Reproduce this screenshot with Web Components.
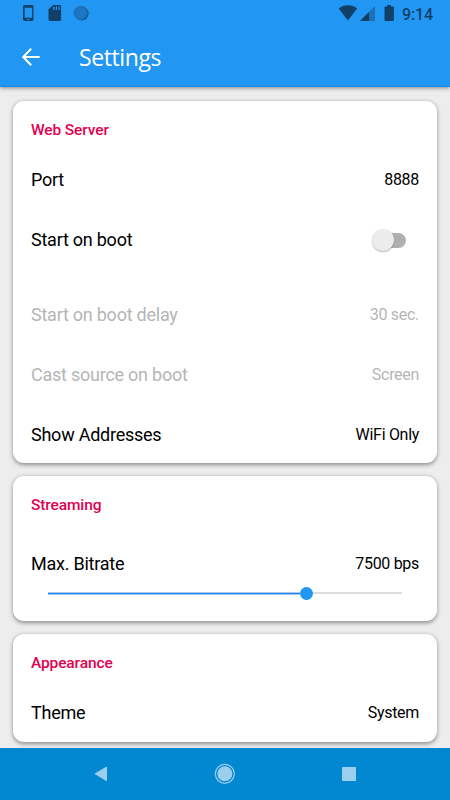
<!DOCTYPE html>
<html lang="en">
<head>
<meta charset="utf-8">
<title>Settings</title>
<style>
html,body{margin:0;height:100%;overflow:hidden;background:#ededed}
body{font-family:Roboto,sans-serif;color:#000}
</style>
</head>
<body>
<settings-screen></settings-screen>
<script>
const define = (name, html) => {
  const t = document.createElement('template');
  t.innerHTML = html;
  customElements.define(name, class extends HTMLElement {
    constructor() {
      super();
      this.attachShadow({ mode: 'open' }).append(t.content.cloneNode(true));
    }
  });
};

define('status-bar', `<style>
:host{display:flex;height:28px;color:#104067;justify-content:space-between}
svg{display:block;flex:none}
span{font-size:16px;line-height:29px;letter-spacing:-.1px;font-weight:500;color:#104067}
.r{display:flex;width:112px}
</style>
<svg width="100" height="28" viewBox="0 0 100 28">
<path fill="#104067" fill-rule="evenodd" d="M24.700 5h7.100q1.700 0 1.700 1.700v12.600q0 1.700-1.700 1.700h-7.100q-1.700 0-1.700-1.700V6.700Q23 5 24.700 5ZM24.600 7.700v10.100h7.500v-10.100ZM26.700 19v.8h3.100v-.8Z"/>
<path fill="#104067" d="M53 5h6.600q1.500 0 1.500 1.500v13q0 1.500-1.500 1.500H50q-1.500 0-1.500-1.500V9.500Z"/>
<path stroke="#2196f3" stroke-width="1.300" d="M53.800 6.600v3.300M56.400 6.600v3.300M59 6.600v3.300"/>
<circle cx="81.600" cy="13.500" r="7" fill="#125688"/>
<circle cx="80.600" cy="12.800" r="7.100" fill="#1b76c3"/>
<circle cx="80.800" cy="12.800" r="5.800" fill="none" stroke="#185f9b" stroke-width=".8" stroke-dasharray="1 1.400"/>
</svg>
<div class="r"><svg width="64" height="28" viewBox="338 0 64 28">
<path fill="#104067" d="M347.900 20.500 338.700 8.400Q342.600 5.200 347.900 5.200T357.200 8.400Z"/>
<path fill="#1a71b7" d="M375 6v15h-15Z"/><path fill="#104067" d="M369 12v9h-9Z"/>
<path fill="#104067" d="M387 5h4v1.500h2q.9 0 .9.900V20q0 1-.9 1h-7.500q-1 0-1-1V7.400q0-.9 1-.9H387Z"/>
</svg><span>9:14</span></div>`);

define('app-bar', `<style>
:host{display:block;box-sizing:border-box;height:87px;background:#2196f3;box-shadow:0 1px 4px rgba(0,0,0,.45);position:relative;z-index:1;border-bottom:1px solid #128cf0}
.bar{display:flex;align-items:center;height:58px;padding-left:20px;color:#fff}
svg{width:22px;margin-right:37px}
h1{margin:0;font:400 23px/32px "Open Sans",sans-serif;letter-spacing:-.4px}
</style><status-bar></status-bar><div class="bar">
<svg width="22" height="20" viewBox="0 0 22 20" fill="none" stroke="#fff" stroke-width="2"><path d="M11.200 1.800 3.200 10l8 8.200M3.200 10H19.600"/></svg>
<h1><slot></slot></h1></div>`);

define('settings-card', `<style>
:host{display:block;box-sizing:border-box;background:#fff;border-radius:11px;padding:0 17.700px;box-shadow:0 1.500px 4px rgba(0,0,0,.4)}
h2{margin:0;padding-top:19px;height:30px;font:500 15.500px/20px Roboto,sans-serif;letter-spacing:-.12px;color:#e20050}
</style><h2><slot name="title"></slot></h2><slot></slot>`);

define('setting-row', `<style>
:host{display:flex;align-items:center;justify-content:space-between;height:60px;font-size:18px;letter-spacing:-.24px;line-height:24px}
:host([disabled]){color:#b5b5b5}
.v{font-size:16px;letter-spacing:-.3px}
</style><span><slot></slot></span><span class="v"><slot name="value"></slot></span>`);

define('toggle-switch', `<style>
:host{display:flex;align-items:center;width:27px;height:15px;margin-right:12.700px;border-radius:8px;background:#b0b0b0}
i{flex:none;width:22px;height:22px;margin-left:-7.500px;border-radius:50%;background:#ececec;box-shadow:0 1px 1.500px rgba(0,0,0,.3)}
</style><i></i>`);

define('range-slider', `<style>
:host{display:flex;align-items:center;height:14px;margin:0 17px}
.a{width:252px;height:1px;background:#2188f0;border:solid #a6c8f2;border-width:1px 0}
.t{width:13px;height:13px;border-radius:50%;background:#2196f3}
.b{flex:1;height:2px;background:#dcdcdc}
</style><div class="a"></div><div class="t"></div><div class="b"></div>`);

define('nav-bar', `<style>
:host{display:block;height:52.500px;background:#0288d1;position:relative;z-index:2}
svg{display:block}
</style><svg width="450" height="52.500" viewBox="0 747.500 450 52.500">
<path fill="#9acfed" d="M94.300 773.200 106.200 766.300q.8-.4.800.5v13.200q0 1-.8.500Z"/>
<circle cx="224.800" cy="773.300" r="9.500" fill="none" stroke="#9acfed" stroke-width="1.200"/>
<circle cx="224.800" cy="773.300" r="7.500" fill="#9acfed"/>
<rect x="342" y="766.500" width="14" height="14" rx=".8" fill="#9acfed"/></svg>`);

define('settings-screen', `<style>
:host{display:flex;flex-direction:column;width:450px;height:800px;background:#ededed}
app-bar,nav-bar{flex:none}
main{flex:1;min-height:0;overflow:hidden;display:flex;flex-direction:column;gap:13px;padding:14px 13.300px 0}
settings-card{flex:none}
.web{height:362px}.stream{height:145px}.look{height:107.500px}
.gap{margin-top:15px}
.stream setting-row{margin-top:9px}
.stream range-slider{margin-top:-8px}
</style>
<app-bar>Settings</app-bar>
<main>
<settings-card class="web"><span slot="title">Web Server</span>
<setting-row>Port<span slot="value">8888</span></setting-row>
<setting-row>Start on boot<toggle-switch slot="value"></toggle-switch></setting-row>
<setting-row class="gap" disabled>Start on boot delay<span slot="value">30 sec.</span></setting-row>
<setting-row disabled>Cast source on boot<span slot="value">Screen</span></setting-row>
<setting-row>Show Addresses<span slot="value">WiFi Only</span></setting-row>
</settings-card>
<settings-card class="stream"><span slot="title">Streaming</span>
<setting-row>Max. Bitrate<span slot="value">7500 bps</span></setting-row>
<range-slider></range-slider>
</settings-card>
<settings-card class="look"><span slot="title">Appearance</span>
<setting-row>Theme<span slot="value">System</span></setting-row>
</settings-card>
</main>
<nav-bar></nav-bar>`);
</script>
</body>
</html>
